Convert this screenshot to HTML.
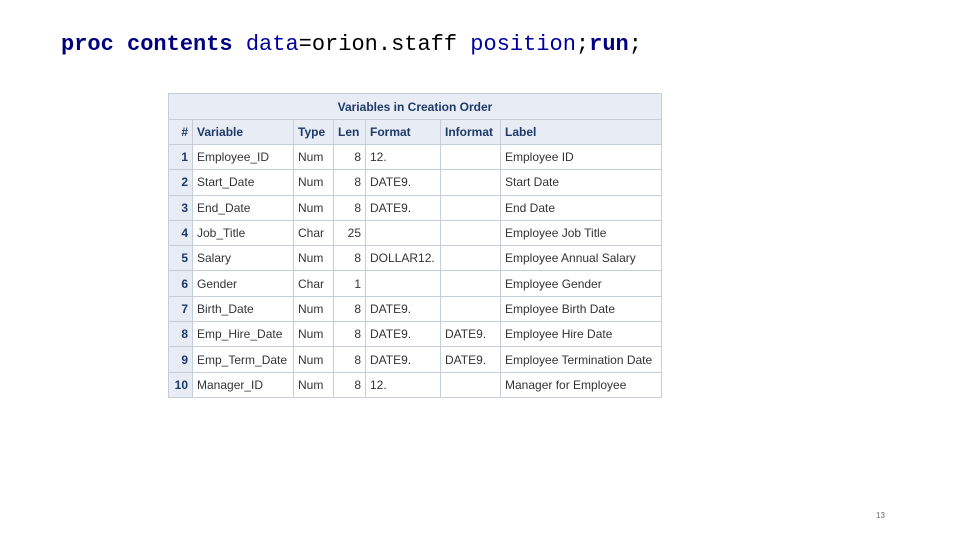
<!DOCTYPE html>
<html><head><style>
body{margin:0;width:960px;height:540px;background:#fff;position:relative;overflow:hidden}
.code{position:absolute;left:61px;top:32px;font-family:"Liberation Mono",monospace;font-size:22px;white-space:pre;color:#000}
.k{color:#000080;font-weight:bold}.b{color:#0000a0}
table{position:absolute;left:168px;top:93px;border-collapse:collapse;font-family:"Liberation Sans",sans-serif;font-size:12px;color:#333;table-layout:fixed;width:493px}
td{border:1px solid #c6cdd8;height:25.3px;padding:0 4px;box-sizing:border-box;white-space:nowrap;overflow:hidden}
tr{height:25.3px}
tr.t{height:26px}tr.h{height:25px}
tr.t td{background:#e8ecf4;color:#1e3a6a;font-weight:bold;text-align:center;height:26px}
tr.h td{background:#e8ecf4;color:#1e3a6a;font-weight:bold;height:25px}
td.n{background:#e8ecf4;color:#1e3a6a;font-weight:bold;text-align:right}
td.r{text-align:right}
.pg{position:absolute;left:876px;top:511px;font-family:"Liberation Sans",sans-serif;font-size:8px;color:#666}
</style></head><body>
<div class="code"><span class="k">proc contents</span> <span class="b">data</span>=orion.staff <span class="b">position</span>;<span class="k">run</span>;</div>
<table>
<colgroup><col style="width:24px"><col style="width:101px"><col style="width:40px"><col style="width:32px"><col style="width:75px"><col style="width:60px"><col style="width:161px"></colgroup>
<tr class="t"><td colspan="7">Variables in Creation Order</td></tr>
<tr class="h"><td style="text-align:right">#</td><td>Variable</td><td>Type</td><td>Len</td><td>Format</td><td>Informat</td><td>Label</td></tr>
<tr><td class="n">1</td><td>Employee_ID</td><td>Num</td><td class="r">8</td><td>12.</td><td></td><td>Employee ID</td></tr>
<tr><td class="n">2</td><td>Start_Date</td><td>Num</td><td class="r">8</td><td>DATE9.</td><td></td><td>Start Date</td></tr>
<tr><td class="n">3</td><td>End_Date</td><td>Num</td><td class="r">8</td><td>DATE9.</td><td></td><td>End Date</td></tr>
<tr><td class="n">4</td><td>Job_Title</td><td>Char</td><td class="r">25</td><td></td><td></td><td>Employee Job Title</td></tr>
<tr><td class="n">5</td><td>Salary</td><td>Num</td><td class="r">8</td><td>DOLLAR12.</td><td></td><td>Employee Annual Salary</td></tr>
<tr><td class="n">6</td><td>Gender</td><td>Char</td><td class="r">1</td><td></td><td></td><td>Employee Gender</td></tr>
<tr><td class="n">7</td><td>Birth_Date</td><td>Num</td><td class="r">8</td><td>DATE9.</td><td></td><td>Employee Birth Date</td></tr>
<tr><td class="n">8</td><td>Emp_Hire_Date</td><td>Num</td><td class="r">8</td><td>DATE9.</td><td>DATE9.</td><td>Employee Hire Date</td></tr>
<tr><td class="n">9</td><td>Emp_Term_Date</td><td>Num</td><td class="r">8</td><td>DATE9.</td><td>DATE9.</td><td>Employee Termination Date</td></tr>
<tr><td class="n">10</td><td>Manager_ID</td><td>Num</td><td class="r">8</td><td>12.</td><td></td><td>Manager for Employee</td></tr>
</table>
<div class="pg">13</div>
</body></html>
